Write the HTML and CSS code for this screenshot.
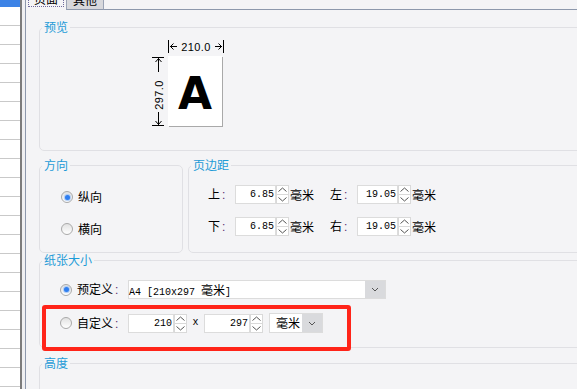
FILE: index.html
```html
<!DOCTYPE html>
<html lang="zh-CN">
<head>
    <meta charset="UTF-8">
    <title>页面设置</title>
    <link rel="stylesheet" href="styles.css">
</head>
<body>
    <div class="sheet">
        <div class="sheet-active"></div>
        <div class="sheet-grid"></div>
    </div>
    <div class="sheet-edge"></div>

    <div class="panel">
        <div class="tabs">
            <div class="tab tab-active"><span class="tab-focus"><span class="tab-text">页面</span></span></div>
            <div class="tab tab-plain"><span class="tab-text">其他</span></div>
            <div class="tab-rest"></div>
        </div>

        <div class="page">
            <fieldset class="group">
                <legend>预览</legend>
                <div class="preview">
                    <svg class="dim-h" width="12" height="71" viewBox="0 0 12 71">
                        <path d="M0 1.5h12M0 69.5h12M6.5 2v14M6.5 56v13" stroke="#000" fill="none"/>
                        <path d="M3.5 6l3-3.5 3 3.5M3.5 65l3 3.5 3-3.5" stroke="#000" fill="none"/>
                        <text x="6.5" y="39" transform="rotate(-90 6.5 39)" text-anchor="middle" dominant-baseline="central">297.0</text>
                    </svg>
                    <div class="preview-right">
                        <svg class="dim-w" width="56" height="13" viewBox="0 0 56 13">
                            <path d="M0.5 0v13M55.5 0v13M2 6.5h7M47 6.5h7" stroke="#000" fill="none"/>
                            <path d="M5.5 3.5l-3 3 3 3M50.5 3.5l3 3-3 3" stroke="#000" fill="none"/>
                            <text x="28" y="10.5" text-anchor="middle">210.0</text>
                        </svg>
                        <div class="paper">A</div>
                    </div>
                </div>
            </fieldset>

            <div class="group-row">
                <fieldset class="group group-orient">
                    <legend>方向</legend>
                    <div class="orient-list">
                        <div class="option"><span class="radio radio-on"></span><span class="option-text">纵向</span></div>
                        <div class="option"><span class="radio"></span><span class="option-text">横向</span></div>
                    </div>
                </fieldset>

                <fieldset class="group group-margin">
                    <legend>页边距</legend>
                    <div class="margin-list">
                        <div class="margin-row">
                            <span class="label">上<span class="colon">:</span></span>
                            <span class="field"><span class="num num-sm">6.85</span><svg class="spin" width="13" height="19" viewBox="0 0 13 19"><rect x=".5" y=".5" width="12" height="18" fill="#fff" stroke="#d9d9d9"/><path d="M.5 9.5h12" stroke="#d9d9d9"/><path d="M2.5 6.5l4-3.5 4 3.5M2.5 12.5l4 3.5 4-3.5" fill="none" stroke="#555"/></svg></span>
                            <span class="unit">毫米</span>
                            <span class="label label-next">左<span class="colon">:</span></span>
                            <span class="field"><span class="num num-sm">19.05</span><svg class="spin" width="13" height="19" viewBox="0 0 13 19"><rect x=".5" y=".5" width="12" height="18" fill="#fff" stroke="#d9d9d9"/><path d="M.5 9.5h12" stroke="#d9d9d9"/><path d="M2.5 6.5l4-3.5 4 3.5M2.5 12.5l4 3.5 4-3.5" fill="none" stroke="#555"/></svg></span>
                            <span class="unit">毫米</span>
                        </div>
                        <div class="margin-row">
                            <span class="label">下<span class="colon">:</span></span>
                            <span class="field"><span class="num num-sm">6.85</span><svg class="spin" width="13" height="19" viewBox="0 0 13 19"><rect x=".5" y=".5" width="12" height="18" fill="#fff" stroke="#d9d9d9"/><path d="M.5 9.5h12" stroke="#d9d9d9"/><path d="M2.5 6.5l4-3.5 4 3.5M2.5 12.5l4 3.5 4-3.5" fill="none" stroke="#555"/></svg></span>
                            <span class="unit">毫米</span>
                            <span class="label label-next">右<span class="colon">:</span></span>
                            <span class="field"><span class="num num-sm">19.05</span><svg class="spin" width="13" height="19" viewBox="0 0 13 19"><rect x=".5" y=".5" width="12" height="18" fill="#fff" stroke="#d9d9d9"/><path d="M.5 9.5h12" stroke="#d9d9d9"/><path d="M2.5 6.5l4-3.5 4 3.5M2.5 12.5l4 3.5 4-3.5" fill="none" stroke="#555"/></svg></span>
                            <span class="unit">毫米</span>
                        </div>
                    </div>
                </fieldset>
            </div>

            <fieldset class="group">
                <legend>纸张大小</legend>
                <div class="size-list">
                    <div class="option size-row">
                        <span class="radio radio-on"></span>
                        <span class="option-text size-label">预定义<span class="colon">:</span></span>
                        <span class="select select-wide">
                            <span class="select-value">A4 [210x297 <span class="select-cjk">毫米</span>]</span>
                            <span class="select-btn"><svg width="8" height="5" viewBox="0 0 8 5"><path d="M1 1l3 3 3-3" fill="none" stroke="#555"/></svg></span>
                        </span>
                    </div>
                    <div class="option size-row size-row-custom">
                        <span class="radio"></span>
                        <span class="option-text size-label">自定义<span class="colon">:</span></span>
                        <span class="field"><span class="num num-md">210</span><svg class="spin" width="13" height="19" viewBox="0 0 13 19"><rect x=".5" y=".5" width="12" height="18" fill="#fff" stroke="#d9d9d9"/><path d="M.5 9.5h12" stroke="#d9d9d9"/><path d="M2.5 6.5l4-3.5 4 3.5M2.5 12.5l4 3.5 4-3.5" fill="none" stroke="#555"/></svg></span>
                        <span class="times">x</span>
                        <span class="field"><span class="num num-md">297</span><svg class="spin" width="13" height="19" viewBox="0 0 13 19"><rect x=".5" y=".5" width="12" height="18" fill="#fff" stroke="#d9d9d9"/><path d="M.5 9.5h12" stroke="#d9d9d9"/><path d="M2.5 6.5l4-3.5 4 3.5M2.5 12.5l4 3.5 4-3.5" fill="none" stroke="#555"/></svg></span>
                        <span class="select select-unit">
                            <span class="select-value select-cjk">毫米</span>
                            <span class="select-btn"><svg width="8" height="5" viewBox="0 0 8 5"><path d="M1 1l3 3 3-3" fill="none" stroke="#555"/></svg></span>
                        </span>
                    </div>
                </div>
            </fieldset>

            <fieldset class="group group-height">
                <legend>高度</legend>
            </fieldset>
        </div>
    </div>

    <div class="highlight"></div>
</body>
</html>
```

FILE: styles.css
```css
html, body {
    margin: 0;
    height: 100%;
    overflow: hidden;
}
body {
    display: flex;
    position: relative;
    background-color: #f4f4f6;
    font-family: "Noto Sans CJK SC", sans-serif;
    font-size: 12px;
    color: #000;
}
.sheet {
    width: 20px;
    flex: none;
    display: flex;
    flex-direction: column;
    background-color: #fff;
    border-right: 2px solid #7c7c7c;
}
.sheet-active {
    height: 7px;
    background-color: #3c83e6;
}
.sheet-grid {
    flex: 1;
    background: repeating-linear-gradient(to bottom, #fff 0 18px, #c9c9c9 18px 19px);
}
.sheet-edge {
    width: 3px;
    flex: none;
    background-color: #efeff1;
}
.panel {
    width: 640px;
    flex: none;
    border-left: 1px solid #8d98ac;
}
.tabs {
    display: flex;
    height: 10px;
}
.tab {
    height: 10px;
    overflow: hidden;
    box-sizing: border-box;
}
.tab-active {
    width: 40px;
    padding: 0 2px;
}
.tab-focus {
    display: block;
    height: 7px;
    overflow: hidden;
    border: 1px dotted #6f6a9c;
    border-top: 0;
    box-sizing: border-box;
}
.tab-text {
    display: block;
    margin-top: -7px;
    line-height: 12px;
    text-align: center;
}
.tab-plain {
    width: 38px;
    background-color: #d7d8dc;
    border: 1px solid #9aa3b5;
    border-top: 0;
    border-bottom-color: #8d98ac;
}
.tab-plain .tab-text {
    margin-top: -6px;
}
.tab-rest {
    flex: 1;
    border-bottom: 1px solid #8d98ac;
}
.page {
    padding: 10px 0 0 13px;
}
.group {
    margin: 0;
    padding: 0;
    min-width: 0;
    border: 1px solid #e0e0e4;
    border-radius: 5px;
}
.group legend {
    margin-left: 2px;
    padding: 0 2px;
    line-height: 14px;
    color: #1e9bd7;
}

/* preview */
.preview {
    display: flex;
    padding: 6px 0 23px 112px;
}
.dim-h {
    margin-top: 16px;
}
.dim-h text, .dim-w text {
    font-family: "Liberation Sans", sans-serif;
    font-size: 11px;
    letter-spacing: 0.4px;
}
.preview-right {
    margin-left: 4px;
}
.dim-w {
    display: block;
    margin-bottom: 3px;
}
.paper {
    width: 54px;
    height: 70px;
    padding-top: 4px;
    box-sizing: border-box;
    background-color: #fff;
    box-shadow: 1px 1px 0 #a9a9a9;
    display: flex;
    align-items: center;
    justify-content: center;
    font-family: "DejaVu Sans", sans-serif;
    font-weight: bold;
    font-size: 44px;
}

/* orientation + margins */
.group-row {
    display: flex;
    gap: 5px;
    margin-top: 7px;
}
.group-orient {
    width: 144px;
    box-sizing: border-box;
}
.group-margin {
    flex: 1;
}
.orient-list {
    display: flex;
    flex-direction: column;
    gap: 18px;
    padding: 18px 0 16px 21px;
}
.option {
    display: flex;
    align-items: center;
    height: 14px;
}
.option-text {
    margin-left: 5px;
    line-height: 14px;
}
.radio {
    width: 12px;
    height: 12px;
    flex: none;
    box-sizing: border-box;
    border: 1px solid #a9a9a9;
    border-radius: 50%;
    background: linear-gradient(#e2e2e2, #fff);
    display: flex;
    align-items: center;
    justify-content: center;
}
.radio-on::after {
    content: "";
    width: 5px;
    height: 5px;
    border-radius: 50%;
    background-color: #2f7ef0;
    box-shadow: 0 0 1px 1px #a8c8f4;
}
.margin-list {
    display: flex;
    flex-direction: column;
    gap: 13px;
    padding: 13px 0 16px 19px;
}
.margin-row {
    display: flex;
    align-items: center;
    height: 19px;
}
.label {
    width: 27px;
    line-height: 14px;
}
.label-next {
    margin-left: 16px;
}
.colon {
    margin-left: 2px;
    color: #5b2d6e;
    font-family: "Liberation Sans", sans-serif;
}
.field {
    display: flex;
    height: 19px;
}
.num {
    height: 19px;
    box-sizing: border-box;
    border: 1px solid #dcdcdc;
    background-color: #fff;
    padding-right: 1px;
    text-align: right;
    font-family: "Liberation Mono", monospace;
    font-size: 10px;
    line-height: 17px;
}
.num-sm {
    width: 41px;
}
.num-md {
    width: 46px;
}
.spin {
    display: block;
}
.unit {
    width: 24px;
    margin-left: 1px;
    line-height: 14px;
}

/* paper size */
.size-list {
    display: flex;
    flex-direction: column;
    gap: 14px;
    padding: 13px 0 14px 20px;
}
.size-row {
    height: 19px;
}
.size-row-custom {
    height: 20px;
}
.size-label {
    width: 51px;
}
.select {
    display: flex;
    height: 19px;
    box-sizing: border-box;
    border: 1px solid #dcdcdc;
    background-color: #fff;
}
.select-wide {
    width: 258px;
}
.select-unit {
    width: 54px;
    height: 20px;
    margin-left: 6px;
}
.select-value {
    flex: 1;
    padding-left: 0;
    font-family: "Liberation Mono", "Noto Sans CJK SC", monospace;
    font-size: 10px;
    line-height: 17px;
    white-space: nowrap;
}
.select-cjk {
    font-family: "Noto Sans CJK SC", sans-serif;
    font-size: 12px;
}
.select-unit .select-value {
    padding-left: 6px;
    line-height: 18px;
}
.select-btn {
    width: 20px;
    flex: none;
    background-color: #d9dadd;
    display: flex;
    align-items: center;
    justify-content: center;
}
.times {
    width: 17px;
    text-align: center;
    font-family: "Liberation Mono", monospace;
    font-size: 10px;
    line-height: 14px;
}
.group-height {
    margin-top: 8px;
    min-height: 40px;
}

/* annotation box drawn over the custom size row */
.highlight {
    position: absolute;
    left: 42px;
    top: 305px;
    width: 309px;
    height: 46px;
    box-sizing: border-box;
    border: 4px solid #ff2419;
    border-radius: 3px;
}
```
